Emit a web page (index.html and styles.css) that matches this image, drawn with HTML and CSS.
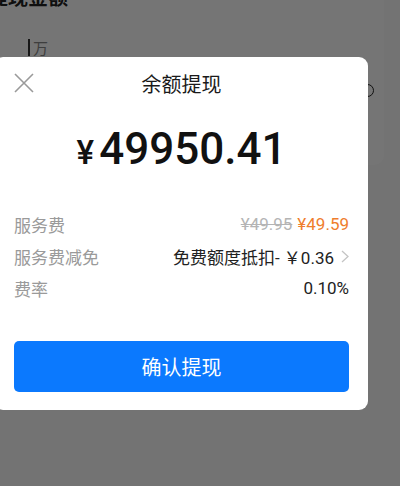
FILE: index.html
```html
<!DOCTYPE html>
<html lang="zh-CN">
<head>
    <meta charset="UTF-8">
    <meta name="viewport" content="width=device-width, initial-scale=1.0">
    <title>余额提现</title>
    <link rel="stylesheet" href="styles.css">
</head>
<body>
    <!-- Halaman di belakang -->
    <div class="page">
        <div class="card">
            <h2 class="card-title">提现金额</h2>
            <div class="amount-input">
                <span class="caret"></span>
                <span class="unit">万</span>
            </div>
            <span class="card-icon"></span>
        </div>
    </div>

    <!-- Modal Tarik Saldo -->
    <div class="overlay">
        <div class="modal">
            <div class="modal-head">
                <svg class="close" width="20" height="20" viewBox="0 0 20 20">
                    <path d="M1 1 L19 19 M19 1 L1 19" stroke="#9a9a9a" stroke-width="1.6" fill="none"/>
                </svg>
                <h1 class="modal-title">余额提现</h1>
                <span></span>
            </div>

            <div class="amount"><span class="yen">¥</span>49950.41</div>

            <div class="rows">
                <div class="row">
                    <span class="label">服务费</span>
                    <span class="value"><s class="old">¥49.95</s> <span class="fee">¥49.59</span></span>
                </div>
                <div class="row">
                    <span class="label">服务费减免</span>
                    <span class="value"><span>免费额度抵扣-&nbsp;￥0.36</span><svg class="chev" width="8" height="13" viewBox="0 0 8 13"><path d="M1 1 L7 6.5 L1 12" stroke="#c4c4c4" stroke-width="1.3" fill="none"/></svg></span>
                </div>
                <div class="row">
                    <span class="label">费率</span>
                    <span class="value">0.10%</span>
                </div>
            </div>

            <button class="confirm">确认提现</button>
        </div>
    </div>
</body>
</html>
```

FILE: styles.css
```css
body {
    margin: 0;
    height: 486px;
    overflow: hidden;
    background-color: #fafafa;
    font-family: Roboto, "Noto Sans CJK SC", sans-serif;
}

.page {
    padding-right: 16px;
}

.card {
    position: relative;
    background-color: #fff;
    margin-left: -12px;
    margin-top: -20px;
    height: 185px;
    border-radius: 0 0 10px 0;
}

.card-title {
    margin: 0;
    padding-top: 6px;
    font-size: 20px;
    font-weight: bold;
    color: #222;
    line-height: 24px;
}

.amount-input {
    display: flex;
    align-items: center;
    gap: 3px;
    margin-top: 27px;
    margin-left: 40px;
}

.caret {
    width: 2px;
    height: 17px;
    background-color: #333;
}

.unit {
    font-size: 15px;
    color: #888;
}

.card-icon {
    position: absolute;
    top: 104px;
    right: 10px;
    width: 11px;
    height: 11px;
    border: 1.5px solid #222;
    border-radius: 50%;
}

/* Modal */
.overlay {
    position: fixed;
    left: 0;
    top: 0;
    width: 100%;
    height: 100%;
    background-color: rgba(0, 0, 0, 0.54);
}

.modal {
    width: 374px;
    margin-left: -6px;
    margin-top: 57px;
    padding: 0 19px 18px 20px;
    box-sizing: border-box;
    background-color: #fff;
    border-radius: 9px;
}

.modal-head {
    display: grid;
    grid-template-columns: 40px 1fr 40px;
    align-items: center;
    height: 52px;
}

.close {
    display: block;
}

.modal-title {
    margin: 0;
    text-align: center;
    font-size: 20px;
    font-weight: normal;
    color: #1a1a1a;
}

.amount {
    height: 80px;
    line-height: 80px;
    text-align: center;
    font-size: 44px;
    font-weight: 500;
    color: #111;
}

.yen {
    font-size: 33px;
    margin-right: 5px;
}

.rows {
    margin-top: 19px;
}

.row {
    display: flex;
    justify-content: space-between;
    align-items: center;
    height: 32px;
    font-size: 17px;
}

.label {
    color: #9a9a9a;
}

.value {
    display: flex;
    align-items: center;
    gap: 5px;
    color: #222;
}

.old {
    color: #b4b4b4;
}

.fee {
    color: #ef7d2d;
}

.chev {
    margin-left: 2px;
}

.confirm {
    display: block;
    width: 100%;
    height: 51px;
    margin-top: 37px;
    border: none;
    border-radius: 5px;
    background-color: #0b79fe;
    color: #fff;
    font-family: inherit;
    font-size: 20px;
    cursor: pointer;
}
```
